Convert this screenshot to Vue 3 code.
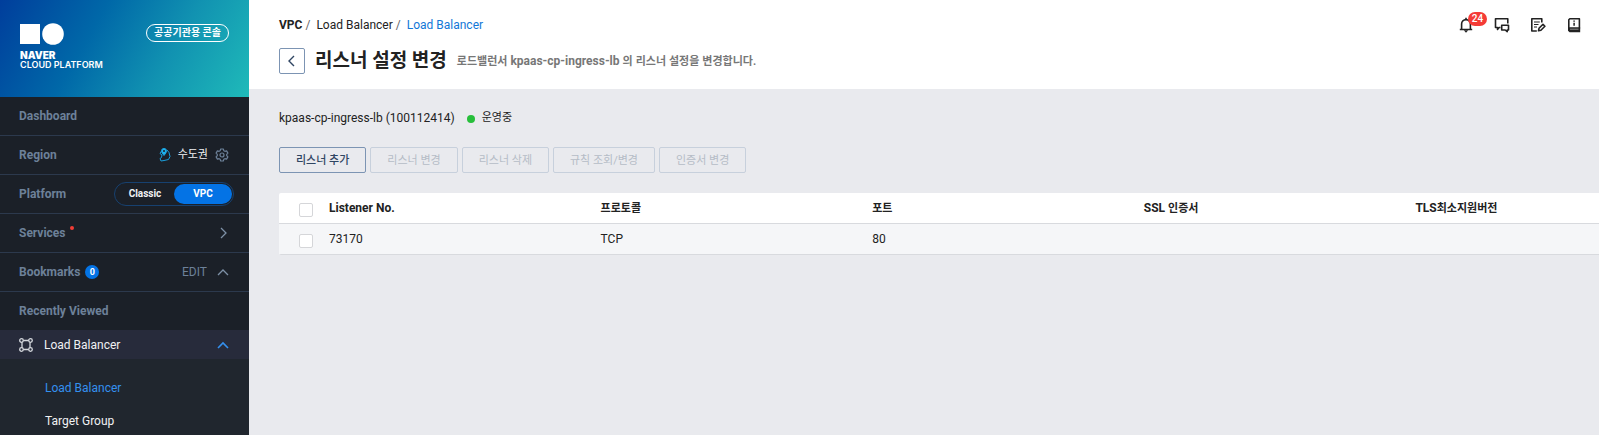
<script setup>
import { ref } from 'vue'

const platform = ref('VPC')
const subMenu = [
  { label: 'Load Balancer', active: true },
  { label: 'Target Group', active: false },
]
const actions = [
  { label: '리스너 추가', enabled: true },
  { label: '리스너 변경', enabled: false },
  { label: '리스너 삭제', enabled: false },
  { label: '규칙 조회/변경', enabled: false },
  { label: '인증서 변경', enabled: false },
]
const listeners = [{ no: '73170', protocol: 'TCP', port: '80', ssl: '', tls: '' }]
</script>

<template>
  <div class="console">
    <aside class="sidebar">
      <header class="brand">
        <a class="logo" href="#">
          <svg width="44" height="22" viewBox="0 0 44 22" aria-hidden="true">
            <path d="M0 1h20v20H0z" fill="#fff" />
            <circle cx="33" cy="11" r="10.8" fill="#fff" />
          </svg>
          <strong>NAVER</strong>
          <span>CLOUD PLATFORM</span>
        </a>
        <span class="gov-badge">공공기관용 콘솔</span>
      </header>

      <nav>
        <div class="row"><a class="label" href="#">Dashboard</a></div>
        <div class="row">
          <span class="label">Region</span>
          <div class="tools region">
            <svg width="12" height="16" viewBox="0 0 12 16" fill="none" stroke="#1a9fdc" stroke-linejoin="round" aria-hidden="true">
              <path d="M2.5 4 1 6.5l2 1.5-.5 2.5-1.500 1L2 14l3-.5 4.500-1 1.500-3L10 5.500 8 3" />
              <path d="M5 8.500C3.500 6.500 2.500 5.300 2.500 3.900a2.500 2.500 0 0 1 5 0C7.500 5.300 6.500 6.500 5 8.500z" fill="#1fb4ee" />
              <circle cx="5" cy="3.900" r="1" fill="#1b2028" stroke="none" />
            </svg>
            <span class="ko">수도권</span>
            <button type="button" aria-label="Region settings">
              <svg width="14" height="14" viewBox="0 0 14 14" fill="none" stroke="#6d8199" stroke-width="1.2" stroke-linejoin="round" aria-hidden="true">
                <path d="M5.700 1h2.600l.5 1.700 1.100.6 1.700-.4 1.300 2.200L11.700 6.400v1.200l1.200 1.300-1.300 2.200-1.700-.4-1.100.6L8.300 13H5.700l-.5-1.700-1.100-.6-1.700.4-1.300-2.200 1.200-1.300V6.400L1.100 5.100l1.300-2.200 1.700.4 1.100-.6z" />
                <circle cx="7" cy="7" r="2" />
              </svg>
            </button>
          </div>
        </div>
        <div class="row platform">
          <span class="label">Platform</span>
          <div class="toggle" role="group" aria-label="Platform">
            <button
              v-for="p in ['Classic', 'VPC']"
              :key="p"
              type="button"
              :class="{ on: platform === p }"
              :aria-pressed="platform === p"
              @click="platform = p"
            >{{ p }}</button>
          </div>
        </div>
        <div class="row">
          <a class="label services" href="#">Services<i class="new-dot"></i></a>
          <svg class="arrow" width="12" height="12" viewBox="0 0 12 12" aria-hidden="true"><path d="M4 1l5 5-5 5" /></svg>
        </div>
        <div class="row">
          <span class="label">Bookmarks</span>
          <span class="count">0</span>
          <div class="tools">
            <button type="button" class="edit">EDIT</button>
            <svg class="arrow" width="12" height="12" viewBox="0 0 12 12" aria-hidden="true"><path d="M1 9l5-5 5 5" /></svg>
          </div>
        </div>
        <div class="row last"><span class="label">Recently Viewed</span></div>

        <button type="button" class="service" aria-expanded="true">
          <svg width="14" height="14" viewBox="0 0 14 14" fill="none" stroke="#d5d8dd" stroke-width="1.300" aria-hidden="true">
            <circle cx="2.500" cy="2.500" r="1.800" /><circle cx="11.500" cy="2.500" r="1.800" />
            <circle cx="2.500" cy="11.500" r="1.800" /><circle cx="11.500" cy="11.500" r="1.800" />
            <path d="M4.300 2.500h5.400M4.300 11.500h5.400M3 4.300v5.400M11 4.300v5.400" />
          </svg>
          <span>Load Balancer</span>
          <svg class="arrow blue" width="12" height="12" viewBox="0 0 12 12" aria-hidden="true"><path d="M1 9l5-5 5 5" /></svg>
        </button>
        <ul class="submenu">
          <li v-for="item in subMenu" :key="item.label">
            <a href="#" :class="{ active: item.active }">{{ item.label }}</a>
          </li>
        </ul>
      </nav>
    </aside>

    <main class="main">
      <header class="page-head">
        <div class="top">
          <nav class="crumbs" aria-label="Breadcrumb">
            <a class="root" href="#">VPC</a><i>/</i><a href="#">Load Balancer</a><i>/</i><a class="current" href="#">Load Balancer</a>
          </nav>
          <div class="icons">
            <button type="button" aria-label="Notifications">
              <svg width="16" height="16" viewBox="0 0 16 16" fill="none" stroke="#222" stroke-width="1.600" stroke-linejoin="round" aria-hidden="true">
                <path d="M1.800 12.500h12.400M3.600 12.500V7a4.400 4.400 0 0 1 8.800 0v5.500M8 .8V3" />
                <path d="M5.800 13.200h4.400L8 15.800z" fill="#222" stroke="none" />
              </svg>
              <span class="alert">24</span>
            </button>
            <button type="button" aria-label="Chat">
              <svg width="16" height="16" viewBox="0 0 16 16" fill="none" stroke="#222" stroke-width="1.600" stroke-linejoin="round" aria-hidden="true">
                <path d="M6.500 10.500H5L3.500 12.500v-2H1.500v-8.700h12.300v4.700" />
                <path d="M7.700 8.200h6.800v4.800h-1.300v1.700l-2-1.700H7.700z" />
              </svg>
            </button>
            <button type="button" aria-label="Notes">
              <svg width="16" height="16" viewBox="0 0 16 16" fill="none" stroke="#222" stroke-width="1.600" stroke-linejoin="round" aria-hidden="true">
                <path d="M11.800 5.500V1.800H1.800v12.200h5" />
                <path d="M4 5h5.800M4 7.500h4.500M4 10h3" stroke-width="1.200" />
                <path d="M8.500 13.800l.5-2.500 4-4 1.900 1.900-4 4z" />
              </svg>
            </button>
            <button type="button" aria-label="Guide">
              <svg width="16" height="16" viewBox="0 0 16 16" fill="none" stroke="#222" stroke-width="1.600" stroke-linejoin="round" aria-hidden="true">
                <path d="M3.800 1.800h9.600v9.400H2.800V2.800z" />
                <path d="M2 10.600h12.200v4.600H3.600L2 13.800z" fill="#222" stroke="none" />
                <path d="M4 12.200h8.500" stroke="#aaa" stroke-width=".8" />
                <path d="M8.100 3.600v1.200M8.100 5.800v3" stroke-width="1.500" />
              </svg>
            </button>
          </div>
        </div>
        <div class="title-row">
          <button type="button" class="back" aria-label="Back">
            <svg width="12" height="12" viewBox="0 0 12 12" aria-hidden="true"><path d="M8 1L3 6l5 5" /></svg>
          </button>
          <h1>리스너 설정 변경</h1>
          <p><span class="ko">로드밸런서</span> kpaas-cp-ingress-lb <span class="ko">의</span> <span class="ko">리스너</span> <span class="ko">설정을</span> <span class="ko">변경합니다.</span></p>
        </div>
      </header>

      <section class="content">
        <div class="status">
          <span>kpaas-cp-ingress-lb (100112414)</span>
          <i class="dot"></i>
          <span class="ko">운영중</span>
        </div>
        <div class="actions">
          <button v-for="a in actions" :key="a.label" type="button" :disabled="!a.enabled">{{ a.label }}</button>
        </div>
        <div class="table-wrap">
          <table>
            <colgroup><col class="check-col" /><col span="5" /></colgroup>
            <thead>
              <tr>
                <th><input type="checkbox" aria-label="Select all" /></th>
                <th>Listener No.</th>
                <th><span class="ko">프로토콜</span></th>
                <th><span class="ko">포트</span></th>
                <th>SSL <span class="ko">인증서</span></th>
                <th>TLS<span class="ko">최소지원버전</span></th>
              </tr>
            </thead>
            <tbody>
              <tr v-for="l in listeners" :key="l.no">
                <td><input type="checkbox" :aria-label="'Select ' + l.no" /></td>
                <td>{{ l.no }}</td>
                <td>{{ l.protocol }}</td>
                <td>{{ l.port }}</td>
                <td>{{ l.ssl }}</td>
                <td>{{ l.tls }}</td>
              </tr>
            </tbody>
          </table>
        </div>
      </section>
    </main>
  </div>
</template>

<style>
body {
  margin: 0;
}
</style>

<style scoped>
.console {
  display: flex;
  min-height: 100vh;
  font-family: Roboto, "Noto Sans CJK KR", sans-serif;
  font-size: 12px;
  line-height: 18px;
  color: #222;
}
.console * {
  box-sizing: border-box;
}
a {
  color: inherit;
  text-decoration: none;
}
button {
  padding: 0;
  border: 0;
  background: none;
  color: inherit;
  font: inherit;
  cursor: pointer;
}
svg {
  display: block;
  flex: none;
}
.ko {
  font-size: 11px;
}

/* sidebar */
.sidebar {
  flex: none;
  width: 249px;
  background: #1b2028;
  color: #f0f1f3;
}
.brand {
  display: flex;
  align-items: flex-start;
  justify-content: space-between;
  height: 97px;
  padding: 23px 20px 0;
  background: linear-gradient(120deg, #003e9c 0%, #0068a8 36%, #1192b1 66%, #1fbab9 100%);
}
.logo {
  display: flex;
  flex-direction: column;
  font-family: Inter, sans-serif;
  font-size: 10px;
  line-height: 10px;
  color: #fff;
  white-space: nowrap;
}
.logo strong {
  margin-top: 5px;
  font-weight: 900;
}
.logo span {
  font-size: 9px;
  font-weight: 600;
}
.gov-badge {
  margin-top: 1px;
  padding: 0 7px;
  border: 1px solid #fff;
  border-radius: 9px;
  font-size: 10px;
  line-height: 16px;
  font-weight: 700;
  color: #fff;
}
.row {
  display: flex;
  align-items: center;
  height: 39px;
  padding: 0 20px 0 19px;
  border-bottom: 1px solid #2c394d;
}
.row.platform {
  padding-right: 15px;
}
.row.last {
  height: 38px;
  border-bottom: 0;
}
.label {
  font-weight: 700;
  color: #6d8199;
}
.tools {
  display: flex;
  align-items: center;
  gap: 10px;
  margin-left: auto;
}
.region {
  gap: 7px;
}
.toggle {
  display: flex;
  width: 120px;
  height: 24px;
  margin-left: auto;
  padding: 1px;
  border: 1px solid #174170;
  border-radius: 12px;
}
.toggle button {
  flex: 1;
  border-radius: 10px;
  font-size: 10px;
  font-weight: 700;
}
.toggle .on {
  background: #0473e5;
  color: #fff;
}
.services {
  display: flex;
}
.new-dot {
  width: 4px;
  height: 4px;
  margin: 2px 0 0 4px;
  border-radius: 50%;
  background: #f33d36;
}
.arrow {
  margin-left: auto;
  fill: none;
  stroke: #7d90a6;
  stroke-width: 1.3;
}
.arrow.blue {
  stroke: #3490ee;
  stroke-width: 1.6;
}
.count {
  width: 14px;
  height: 14px;
  margin-left: 5px;
  border-radius: 50%;
  background: #0473e5;
  color: #fff;
  font-size: 9px;
  line-height: 14px;
  font-weight: 700;
  text-align: center;
}
.edit {
  color: #6d8199;
}
.service {
  display: flex;
  align-items: center;
  gap: 11px;
  width: 100%;
  height: 29px;
  padding: 0 20px 0 19px;
  background: #272b3b;
}
.submenu {
  margin: 0;
  padding: 13px 0 10px;
  background: #20262e;
  list-style: none;
}
.submenu a {
  display: block;
  padding-left: 45px;
  line-height: 33px;
}
.submenu .active {
  color: #3490ee;
}

/* main */
.main {
  flex: 1;
  min-width: 0;
  background: #e9eaee;
}
.page-head {
  height: 89px;
  padding: 16px 17px 0 30px;
  background: #fff;
}
.top {
  display: flex;
  align-items: center;
  justify-content: space-between;
  height: 18px;
}
.crumbs i {
  margin: 0 6px 0 3px;
  color: #666;
  font-style: normal;
}
.root {
  font-weight: 700;
}
.current {
  color: #1277d7;
}
.icons {
  display: flex;
  gap: 20px;
}
.icons button {
  position: relative;
}
.alert {
  position: absolute;
  top: -5px;
  left: 10px;
  width: 19px;
  border-radius: 7px;
  background: #f43b36;
  color: #fff;
  font-size: 10px;
  line-height: 14px;
  font-weight: 500;
  text-align: center;
}
.title-row {
  display: flex;
  align-items: center;
  height: 26px;
  margin-top: 14px;
}
.back {
  display: flex;
  align-items: center;
  justify-content: center;
  width: 26px;
  height: 26px;
  border: 1px solid #7c94b3;
  border-radius: 2px;
}
.back path {
  fill: none;
  stroke: #2f4562;
  stroke-width: 1.4;
}
h1 {
  margin: 0 10px;
  font-size: 19px;
  line-height: 26px;
  font-weight: 700;
}
p {
  margin: 0;
  font-weight: 700;
  color: #777;
}
.content {
  padding: 20px 0 20px 30px;
}
.status {
  display: flex;
  align-items: center;
}
.dot {
  width: 8px;
  height: 8px;
  margin: 1px 7px 0 12px;
  border-radius: 50%;
  background: #27bf3b;
}
.actions {
  display: flex;
  gap: 4px;
  margin: 20px 0;
}
.actions button {
  height: 26px;
  padding: 1px 16px 0;
  border: 1px solid #7c94b3;
  border-radius: 2px;
  color: #2f4562;
  font-size: 11px;
  font-weight: 500;
}
.actions button:disabled {
  border-color: #c7d0dc;
  color: #b5bcc6;
  font-weight: 400;
}
.table-wrap {
  overflow: hidden;
  border-radius: 2px 0 0 2px;
}
table {
  width: 1398px;
  border-collapse: separate;
  border-spacing: 0;
  table-layout: fixed;
  background: #fff;
}
.check-col {
  width: 40px;
}
th,
td {
  height: 31px;
  padding: 0 0 0 10px;
  border-bottom: 1px solid #d8dade;
  text-align: left;
  vertical-align: middle;
}
td {
  background: #f5f6f8;
}
th:first-child,
td:first-child {
  padding: 3px 0 0 20px;
}
input {
  display: block;
  appearance: none;
  width: 14px;
  height: 14px;
  margin: 0;
  border: 1px solid #d5d6d9;
  border-radius: 2px;
  background: #fff;
}
</style>
